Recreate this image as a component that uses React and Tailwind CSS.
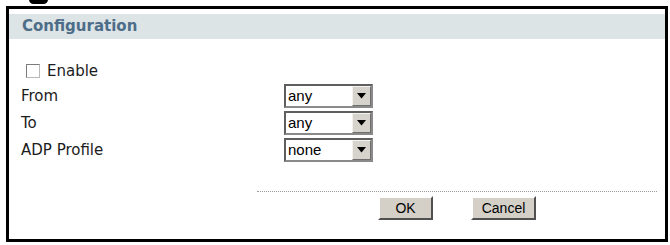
import React from 'react';

const font = { fontFamily: '"DejaVu Sans", Verdana, sans-serif' };

function Select({ value }) {
  return (
    <div className="flex h-[24px] w-[89px] border-2 border-t-[#5f5f5f] border-l-[#5f5f5f] border-r-[#8a8a8a] border-b-[#8a8a8a] bg-white">
      <span className="flex-1 pl-[2px] text-[15px] leading-[20px] text-black font-['Liberation_Sans',Arial,sans-serif]">
        {value}
      </span>
      <span className="flex h-[20px] w-[19px] items-center justify-center border border-t-[#f4f2ee] border-l-[#f4f2ee] border-r-[#6f6f6f] border-b-[#6f6f6f] bg-[#d6d3cc]">
        <svg width="9" height="6" viewBox="0 0 9 6">
          <path d="M0 0 H9 L4.5 5.5 Z" fill="#000" />
        </svg>
      </span>
    </div>
  );
}

function Button({ children, w }) {
  return (
    <button
      type="button"
      className={`h-[24px] ${w} border-2 border-t-white border-l-white border-r-[#505050] border-b-[#505050] bg-[#d4d0c8] text-[14px] text-black font-['Liberation_Sans',Arial,sans-serif]`}
    >
      {children}
    </button>
  );
}

export default function App() {
  const rows = [
    ['From', 'any'],
    ['To', 'any'],
    ['ADP Profile', 'none'],
  ];
  return (
    <div className="h-[245px] w-[670px] bg-white" style={font}>
      {/* bottom of the heading above, cut off by the screenshot */}
      <div className="h-[6px] overflow-hidden">
        <div className="-mt-[5px] ml-[29px] h-[9px] w-[19px] rounded-full bg-black" />
      </div>
      <div className="ml-[6px] h-[236px] w-[662px] border-[3px] border-black pt-[5px]">
        <div className="flex h-[25px] items-center bg-[#dde4e6] pl-[13px] text-[15px] font-bold text-[#4d6d88]">
          Configuration
        </div>

        <div className="mt-[19px] flex h-[26px] items-center pl-[17px] text-[15px] text-[#1c1c1c]">
          <span className="h-[14px] w-[14px] border border-t-[#7c7c7c] border-l-[#7c7c7c] border-r-[#b8b8b8] border-b-[#b8b8b8] bg-white" />
          <span className="ml-[7px]">Enable</span>
        </div>

        {rows.map(([label, value]) => (
          <div key={label} className="mb-[3px] flex h-[24px] items-center pl-[12px] text-[15px] text-[#1c1c1c]">
            <span className="w-[263px]">{label}</span>
            <Select value={value} />
          </div>
        ))}

        <div className="ml-[248px] mt-[29px] w-[400px] border-t border-dotted border-[#9a9a9a]" />
        <div className="ml-[248px] mt-[4px] flex w-[400px] justify-center gap-[38px]">
          <Button w="w-[55px]">OK</Button>
          <Button w="w-[65px]">Cancel</Button>
        </div>
      </div>
    </div>
  );
}
